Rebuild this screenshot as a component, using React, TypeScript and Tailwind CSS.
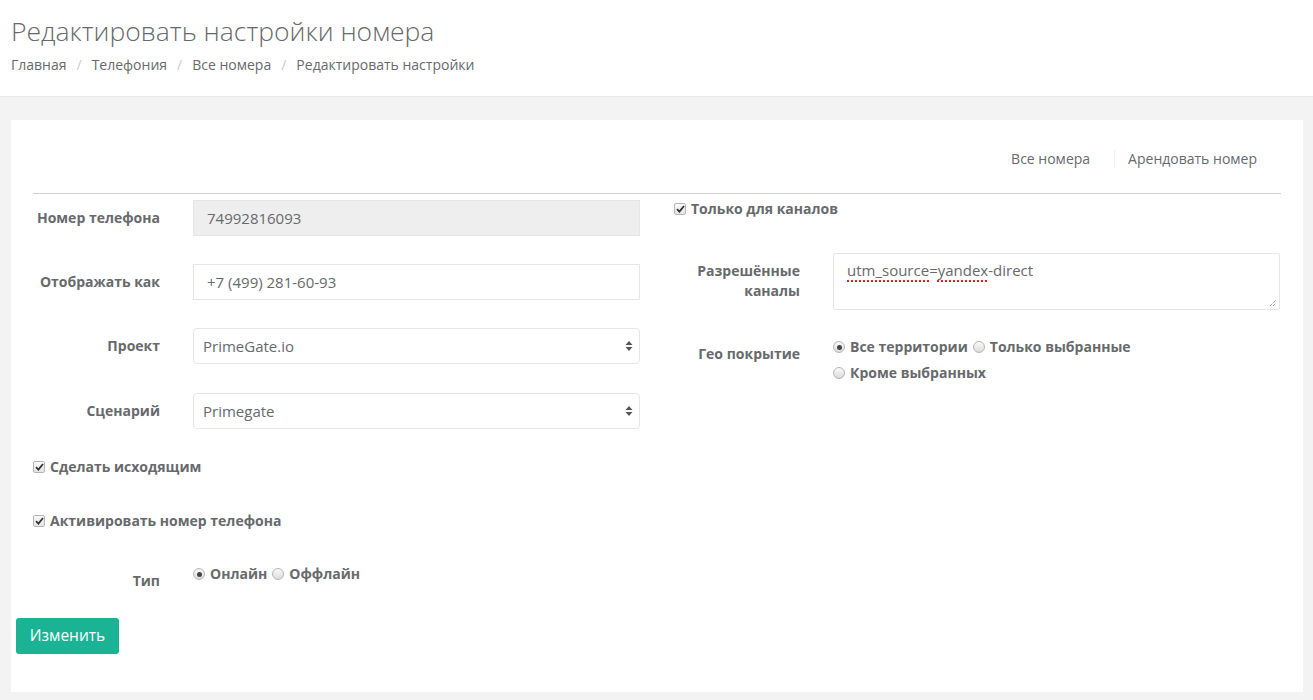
import React from 'react';

const font = { fontFamily: '"Open Sans", "Liberation Sans", sans-serif' };

function Check({ label }: { label: string }) {
  return (
    <label className="flex items-center text-[14px] font-bold leading-[20px] text-[#676a6c]">
      <span className="mr-[5px] flex h-[12px] w-[12px] items-center justify-center rounded-[2px] border border-[#b5b5b5] bg-gradient-to-b from-[#fafafa] to-[#e4e4e4]">
        <svg width="9" height="8" viewBox="0 0 9 8">
          <path d="M1 4.2 L3.4 6.6 L8 1" fill="none" stroke="#333" strokeWidth="1.8" />
        </svg>
      </span>
      {label}
    </label>
  );
}

function Radio({ label, checked }: { label: string; checked?: boolean }) {
  return (
    <label className="flex items-center text-[14px] font-bold leading-[20px] text-[#676a6c]">
      <span className="mr-[5px] flex h-[12px] w-[12px] items-center justify-center rounded-full border border-[#b5b5b5] bg-gradient-to-b from-[#fafafa] to-[#dcdcdc]">
        {checked && <span className="h-[5px] w-[5px] rounded-full bg-[#444]" />}
      </span>
      {label}
    </label>
  );
}

function Field({ label, children }: { label: string; children: React.ReactNode }) {
  return (
    <div className="flex items-center">
      <div className="w-[127px] text-right text-[14px] font-bold leading-[20px] text-[#676a6c]">{label}</div>
      <div className="ml-[33px] flex-1">{children}</div>
    </div>
  );
}

function Arrows() {
  return (
    <svg width="8" height="12" viewBox="0 0 8 12" className="absolute right-[6px] top-1/2 -translate-y-1/2">
      <path d="M4 1 L7.5 5 L0.5 5 Z" fill="#555" />
      <path d="M4 11 L7.5 7 L0.5 7 Z" fill="#555" />
    </svg>
  );
}

function Select({ value }: { value: string }) {
  return (
    <div className="relative flex h-[36px] items-center rounded-[4px] border border-[#e5e6e7] bg-white pl-[9px] text-[15px] text-[#676a6c]">
      {value}
      <Arrows />
    </div>
  );
}

export default function App() {
  return (
    <div className="min-h-[700px] bg-[#f3f3f4] pb-[8px]" style={font}>
      <div className="border-b border-[#e7eaec] bg-white px-[11px] pb-[21px] pt-[16px]">
        <h2 className="text-[26.5px] font-light leading-[30px] text-[#676a6c]">Редактировать настройки номера</h2>
        <div className="mt-[9px] flex text-[14px] leading-[20px] text-[#676a6c]">
          <span>Главная</span>
          <span className="mx-[10px] text-[#ccc]">/</span>
          <span>Телефония</span>
          <span className="mx-[10px] text-[#ccc]">/</span>
          <span>Все номера</span>
          <span className="mx-[10px] text-[#ccc]">/</span>
          <span>Редактировать настройки</span>
        </div>
      </div>

      <div className="ml-[11px] mr-[10px] mt-[23px] h-[572px] bg-white px-[22px] pt-[29px]">
        <div className="flex items-center justify-end text-[14px] leading-[20px] text-[#676a6c]">
          <span>Все номера</span>
          <span className="ml-[24px] h-[18px] border-l border-[#f0f0f0]" />
          <span className="ml-[13px] mr-[24px]">Арендовать номер</span>
        </div>
        <div className="mt-[24px] border-t border-[#cfcfcf]" />

        <div className="flex">
          {/* left column */}
          <div className="w-[607px]">
            <div className="mt-[6px]">
              <Field label="Номер телефона">
                <div className="flex h-[36px] items-center border border-[#e5e6e7] bg-[#eeeeee] px-[13px] text-[15px] text-[#676a6c]">
                  74992816093
                </div>
              </Field>
            </div>
            <div className="mt-[28px]">
              <Field label="Отображать как">
                <div className="flex h-[36px] items-center border border-[#e5e6e7] bg-white px-[13px] text-[15px] text-[#676a6c]">
                  +7 (499) 281-60-93
                </div>
              </Field>
            </div>
            <div className="mt-[28px]">
              <Field label="Проект">
                <Select value="PrimeGate.io" />
              </Field>
            </div>
            <div className="mt-[29px]">
              <Field label="Сценарий">
                <Select value="Primegate" />
              </Field>
            </div>
            <div className="mt-[28px]">
              <Check label="Сделать исходящим" />
            </div>
            <div className="mt-[34px]">
              <Check label="Активировать номер телефона" />
            </div>
            <div className="mt-[33px] flex items-start">
              <div className="mt-[7px] w-[127px] text-right text-[14px] font-bold leading-[20px] text-[#676a6c]">Тип</div>
              <div className="ml-[33px] flex gap-[5px]">
                <Radio label="Онлайн" checked />
                <Radio label="Оффлайн" />
              </div>
            </div>
            <button className="-ml-[17px] mt-[27px] h-[36px] w-[103px] rounded-[3px] bg-[#1ab394] text-[15.5px] text-white">
              Изменить
            </button>
          </div>

          {/* right column */}
          <div className="ml-[34px] w-[606px]">
            <div className="mt-[5px]">
              <Check label="Только для каналов" />
            </div>
            <div className="mt-[34px] flex items-start">
              <div className="mt-[8px] w-[126px] text-right text-[14px] font-bold leading-[20px] text-[#676a6c]">
                Разрешённые
                <br />
                каналы
              </div>
              <div className="relative ml-[33px] h-[57px] flex-1 rounded-[2px] border border-[#e5e6e7] bg-white px-[13px] pt-[6px] text-[15px] leading-[20px] text-[#676a6c]">
                <span className="underline decoration-[#e02020] decoration-dotted decoration-[1.5px] underline-offset-[4px]">utm_source</span>=<span className="underline decoration-[#e02020] decoration-dotted decoration-[1.5px] underline-offset-[4px]">yandex</span>-direct
                <svg width="8" height="8" viewBox="0 0 8 8" className="absolute bottom-[2px] right-[2px]">
                  <path d="M1 7 L7 1 M4 7 L7 4" stroke="#777" strokeWidth="1" strokeDasharray="1 1" />
                </svg>
              </div>
            </div>
            <div className="mt-[27px] flex items-start">
              <div className="mt-[7px] w-[126px] text-right text-[14px] font-bold leading-[20px] text-[#676a6c]">Гео покрытие</div>
              <div className="ml-[33px] flex w-[320px] flex-wrap gap-x-[5px] gap-y-[6px]">
                <Radio label="Все территории" checked />
                <Radio label="Только выбранные" />
                <div className="w-full">
                  <Radio label="Кроме выбранных" />
                </div>
              </div>
            </div>
          </div>
        </div>
      </div>
    </div>
  );
}
